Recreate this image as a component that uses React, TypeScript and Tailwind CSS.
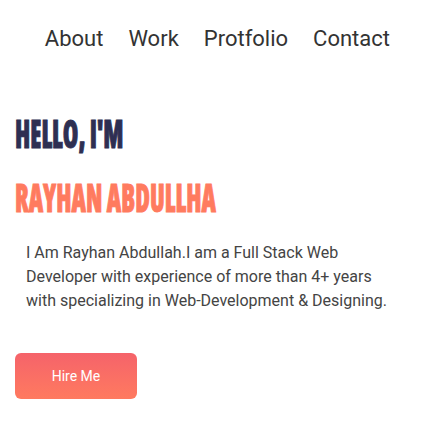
export default function App() {
  return (
    <div className="w-[426px] h-[422px] bg-white overflow-hidden font-['Roboto',sans-serif]">
      <nav className="flex justify-end gap-[25px] pr-[36px] pt-[24px] text-[22px] leading-[30px] text-[#333333]">
        <a>About</a>
        <a>Work</a>
        <a>Protfolio</a>
        <a>Contact</a>
      </nav>
      <div className="flex flex-col items-start pl-[15px] pt-[60px]">
        <h1 className="origin-left scale-x-[0.66] whitespace-nowrap text-[38px] leading-[38px] font-extrabold font-stretch-condensed uppercase text-[#2e2f52] font-['Open_Sans',sans-serif] [-webkit-text-stroke:1px_#2e2f52]">
          Hello, I'm
        </h1>
        <h2 className="mt-[26px] origin-left scale-x-[0.66] whitespace-nowrap text-[38px] leading-[38px] font-extrabold font-stretch-condensed uppercase text-[#ff7b5f] font-['Open_Sans',sans-serif] [-webkit-text-stroke:1px_#ff7b5f]">
          Rayhan Abdullha
        </h2>
        <p className="mt-[25px] pl-[11px] w-[376px] text-[16px] leading-[24px] text-[#444444]">
          I Am Rayhan Abdullah.I am a Full Stack Web Developer with experience of more than 4+ years with specializing in Web-Development &amp; Designing.
        </p>
        <button className="mt-[40px] w-[122px] h-[46px] rounded-[6px] bg-gradient-to-b from-[#f5636a] to-[#ff7a5f] text-white text-[14px]">
          Hire Me
        </button>
      </div>
    </div>
  );
}
